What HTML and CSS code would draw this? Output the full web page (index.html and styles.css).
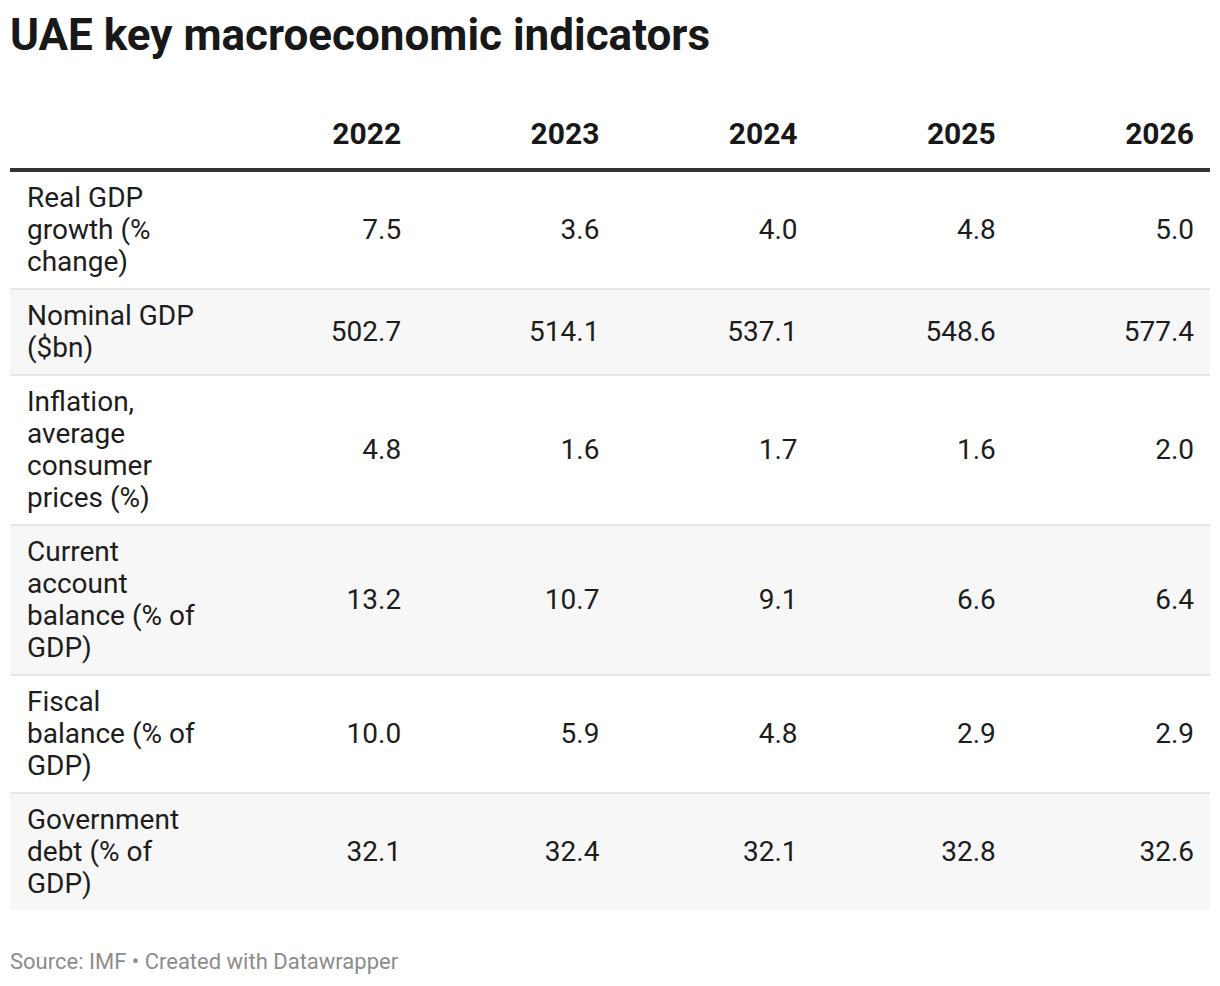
FILE: index.html
```html
<!DOCTYPE html>
<html lang="en">
<head>
<meta charset="utf-8">
<title>UAE key macroeconomic indicators</title>
<link rel="stylesheet" href="styles.css">
</head>
<body>
<div class="chart">
  <h1 class="title">UAE key macroeconomic indicators</h1>
  <table class="data">
    <colgroup>
      <col class="col-label">
      <col><col><col><col><col>
    </colgroup>
    <thead>
      <tr>
        <th class="label"></th>
        <th>2022</th>
        <th>2023</th>
        <th>2024</th>
        <th>2025</th>
        <th>2026</th>
      </tr>
    </thead>
    <tbody>
      <tr>
        <td class="label">Real GDP growth (% change)</td>
        <td>7.5</td><td>3.6</td><td>4.0</td><td>4.8</td><td>5.0</td>
      </tr>
      <tr class="alt">
        <td class="label">Nominal GDP ($bn)</td>
        <td>502.7</td><td>514.1</td><td>537.1</td><td>548.6</td><td>577.4</td>
      </tr>
      <tr>
        <td class="label">Inflation, average consumer prices (%)</td>
        <td>4.8</td><td>1.6</td><td>1.7</td><td>1.6</td><td>2.0</td>
      </tr>
      <tr class="alt">
        <td class="label">Current account balance (% of GDP)</td>
        <td>13.2</td><td>10.7</td><td>9.1</td><td>6.6</td><td>6.4</td>
      </tr>
      <tr>
        <td class="label">Fiscal balance (% of GDP)</td>
        <td>10.0</td><td>5.9</td><td>4.8</td><td>2.9</td><td>2.9</td>
      </tr>
      <tr class="alt last">
        <td class="label">Government debt (% of GDP)</td>
        <td>32.1</td><td>32.4</td><td>32.1</td><td>32.8</td><td>32.6</td>
      </tr>
    </tbody>
  </table>
  <p class="footer">Source: IMF • Created with Datawrapper</p>
</div>
</body>
</html>
```

FILE: styles.css
```css
html, body {
  margin: 0;
  padding: 0;
  background: #ffffff;
}

body {
  font-family: Roboto, "Liberation Sans", sans-serif;
  color: #1d1d1d;
}

.chart {
  padding: 11px 10px 0 10px;
}

.title {
  margin: 0;
  font-size: 44px;
  line-height: 48px;
  font-weight: 700;
  color: #181818;
}

.data {
  width: 1200px;
  margin-top: 49px;
  border-collapse: collapse;
  table-layout: fixed;
}

.col-label {
  width: 209px;
}

.data th {
  font-size: 30px;
  line-height: 32px;
  font-weight: 700;
  text-align: right;
  vertical-align: bottom;
  padding: 10px 16px 18px 16px;
  border-bottom: 4px solid #333333;
  color: #181818;
}

.data td {
  font-size: 28px;
  line-height: 32px;
  text-align: right;
  vertical-align: middle;
  padding: 10px 16px 10px 16px;
  border-bottom: 2px solid #e6e6e6;
}

.data td.label,
.data th.label {
  text-align: left;
  padding-left: 17px;
  padding-right: 18px;
}

.data tr.alt td {
  background: #f7f7f7;
}

.data tr.last td {
  border-bottom: none;
}

.footer {
  margin: 40px 0 0 0;
  font-size: 22px;
  line-height: 24px;
  color: #8c8c8c;
}
```
